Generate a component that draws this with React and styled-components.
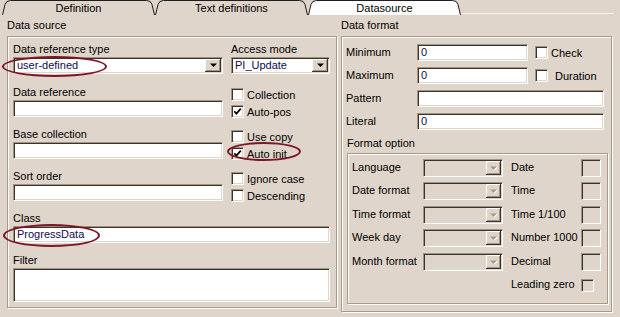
import React from 'react';
import styled, { createGlobalStyle, css } from 'styled-components';

const FACE = '#dfd5ca';
const SHADOW = '#a39381';
const DARK = '#3a342e';
const INK = '#0c0c50';
const ETCH = '#ab9885';

const Global = createGlobalStyle`
  html, body { margin: 0; padding: 0; background: ${FACE}; }
  body {
    font-family: "Liberation Sans", Arial, sans-serif;
    font-size: 11px;
    color: #000;
  }
`;

const sunken = css`
  box-sizing: border-box;
  border: 1px solid;
  border-color: ${SHADOW} #fff #fff ${SHADOW};
  box-shadow: inset 1px 1px 0 ${DARK}, inset -1px -1px 0 ${FACE};
`;

const Root = styled.div`
  position: relative;
  width: 620px;
  height: 317px;
  overflow: hidden;
  background: ${FACE};
  display: flex;
  flex-direction: column;
`;

/* ---------- tabs ---------- */
const TabBar = styled.div`
  display: flex;
  height: 15px;
  padding-left: 2px;
`;

const TabShell = styled.div`
  display: grid;
  width: 153px;
  height: 15px;
  & > * { grid-area: 1 / 1; }
`;

const TabText = styled.span`
  justify-self: center;
  align-self: start;
  line-height: 15px;
  padding-top: 1px;
  color: #000;
`;

const TabFill = styled.div`
  flex: 1;
  height: 13px;
  margin-right: 6px;
  border-bottom: 1px solid #f6f2ec;
`;

function Tab({ label, active }) {
  return (
    <TabShell>
      <svg width="153" height="15" viewBox="0 0 153 15">
        <path
          d="M0.5 15 L3 4.5 Q4 0.5 8.5 0.5 L144.5 0.5 Q149 0.5 150 4.5 L152.5 15"
          fill={active ? '#fff' : FACE}
          stroke="#1e1e1e"
          strokeWidth="1"
        />
      </svg>
      <TabText>{label}</TabText>
    </TabShell>
  );
}

/* ---------- groups ---------- */
const Main = styled.div`
  display: flex;
  gap: 4px;
  padding-left: 7px;
`;

const Column = styled.div`
  display: flex;
  flex-direction: column;
`;

const GroupTitle = styled.div`
  box-sizing: border-box;
  height: 21px;
  padding-top: 4px;
  line-height: 13px;
`;

const GroupBox = styled.div`
  box-sizing: border-box;
  width: ${(p) => p.$w}px;
  height: ${(p) => p.$h}px;
  border: 1px solid ${ETCH};
  box-shadow: inset 1px 1px 0 #fff, 1px 1px 0 #fff;
  padding: ${(p) => p.$pad};
  margin-left: ${(p) => p.$ml || 0}px;
  display: flex;
  flex-direction: column;
`;

/* ---------- generic controls ---------- */
const Label = styled.div`
  line-height: 13px;
  white-space: nowrap;
  margin-bottom: ${(p) => p.$mb || 0}px;
`;

const TextField = styled.div`
  ${sunken};
  width: ${(p) => (p.$w ? `${p.$w}px` : '100%')};
  height: ${(p) => p.$h || 17}px;
  background: #fff;
  color: ${INK};
  padding: 0 3px;
  line-height: 15px;
  white-space: nowrap;
`;

const ComboBox = styled.div`
  ${sunken};
  display: flex;
  align-items: stretch;
  width: ${(p) => p.$w}px;
  height: ${(p) => p.$h || 17}px;
  padding: 1px;
  background: ${(p) => (p.$disabled ? FACE : '#fff')};
`;

const ComboText = styled.div`
  flex: 1;
  color: ${INK};
  line-height: 13px;
  padding-left: 2px;
  white-space: nowrap;
`;

const ComboButton = styled.div`
  width: ${(p) => p.$bw || 16}px;
  background: ${FACE};
  box-shadow: inset -1px -1px 0 ${DARK}, inset 1px 1px 0 #fff,
    inset -2px -2px 0 ${SHADOW};
  display: flex;
  align-items: center;
  justify-content: center;
`;

function Combo({ w, h, value, disabled, bw }) {
  return (
    <ComboBox $w={w} $h={h} $disabled={disabled}>
      <ComboText>{value}</ComboText>
      <ComboButton $bw={bw}>
        <svg width="7" height="5" viewBox="0 0 7 5">
          {disabled && <path d="M1 1 H8 L4.5 4.5 Z" fill="#fff" />}
          <path d="M0 0.5 H7 L3.5 4 Z" fill={disabled ? '#a89a8a' : '#000'} />
        </svg>
      </ComboButton>
    </ComboBox>
  );
}

const CheckRow = styled.div`
  display: flex;
  align-items: center;
  height: ${(p) => p.$h || 17}px;
  gap: ${(p) => p.$gap || 3}px;
  white-space: nowrap;
`;

const CheckBoxSquare = styled.div`
  ${sunken};
  width: 13px;
  height: 13px;
  flex: none;
  background: #fff;
  display: flex;
  align-items: center;
  justify-content: center;
`;

function Check({ label, checked, gap, h }) {
  return (
    <CheckRow $gap={gap} $h={h}>
      <CheckBoxSquare>
        {checked && (
          <svg width="9" height="9" viewBox="0 0 9 9">
            <path d="M1.3 4.2 L3.4 6.6 L7.8 1.6" fill="none" stroke="#000" strokeWidth="1.7" />
          </svg>
        )}
      </CheckBoxSquare>
      <span>{label}</span>
    </CheckRow>
  );
}

/* ---------- left panel ---------- */
const FieldRow = styled.div`
  display: grid;
  grid-template-columns: 210px 99px;
  column-gap: 8px;
  height: ${(p) => p.$h || 42}px;
`;

const Field = styled.div`
  display: flex;
  flex-direction: column;
  margin-top: ${(p) => p.$mt || 0}px;
`;

const CheckStack = styled.div`
  display: flex;
  flex-direction: column;
`;

/* ---------- right panel ---------- */
const FormRow = styled.div`
  display: flex;
  align-items: center;
  height: 17px;
  margin-top: ${(p) => p.$mt || 0}px;
`;

const FormLabel = styled.div`
  width: ${(p) => p.$w}px;
  flex: none;
  line-height: 13px;
  white-space: nowrap;
  padding-bottom: ${(p) => p.$lift || 0}px;
`;

const CheckSlot = styled.div`
  margin-left: 7px;
`;

const SubTitle = styled.div`
  line-height: 13px;
  margin: 7px 0 3px 1px;
`;

const OptRow = styled.div`
  display: flex;
  align-items: center;
  height: 18px;
  margin-top: ${(p) => p.$mt || 0}px;
`;

const OptBox = styled.div`
  ${sunken};
  background: ${FACE};
  width: ${(p) => p.$w}px;
  height: ${(p) => p.$h}px;
  flex: none;
`;

const Spacer = styled.div`
  width: ${(p) => p.$w}px;
  flex: none;
`;

/* ---------- annotation ellipses ---------- */
const Mark = styled.span`
  position: absolute;
  box-sizing: border-box;
  border: 2.5px solid #7e1629;
  border-radius: 50%;
  pointer-events: none;
`;

const options = [
  ['Language', 'Date'],
  ['Date format', 'Time'],
  ['Time format', 'Time 1/100'],
  ['Week day', 'Number 1000'],
  ['Month format', 'Decimal'],
];
const optGaps = [0, 5, 6, 5, 6];

export default function App() {
  return (
    <Root>
      <Global />
      <TabBar>
        <Tab label="Definition" />
        <Tab label="Text definitions" />
        <Tab label="Datasource" active />
        <TabFill />
      </TabBar>

      <Main>
        <Column>
          <GroupTitle>Data source</GroupTitle>
          <GroupBox $w={330} $h={272} $pad="6px 5px 0 5px">
            <FieldRow $h={43}>
              <Field>
                <Label $mb={1}>Data reference type</Label>
                <Combo w={210} value="user-defined" />
              </Field>
              <Field>
                <Label $mb={1}>Access mode</Label>
                <Combo w={99} value="PI_Update" />
              </Field>
            </FieldRow>

            <FieldRow>
              <Field>
                <Label $mb={1}>Data reference</Label>
                <TextField />
              </Field>
              <CheckStack>
                <Check label="Collection" />
                <Check label="Auto-pos" checked />
              </CheckStack>
            </FieldRow>

            <FieldRow>
              <Field>
                <Label $mb={1}>Base collection</Label>
                <TextField />
              </Field>
              <CheckStack>
                <Check label="Use copy" />
                <Check label="Auto init" checked />
              </CheckStack>
            </FieldRow>

            <FieldRow>
              <Field>
                <Label $mb={1}>Sort order</Label>
                <TextField />
              </Field>
              <CheckStack>
                <Check label="Ignore case" />
                <Check label="Descending" />
              </CheckStack>
            </FieldRow>

            <Field>
              <Label $mb={1}>Class</Label>
              <TextField $w={317}>ProgressData</TextField>
            </Field>
            <Field $mt={11}>
              <Label $mb={1}>Filter</Label>
              <TextField $w={317} $h={34} />
            </Field>
          </GroupBox>
        </Column>

        <Column>
          <GroupTitle>Data format</GroupTitle>
          <GroupBox $w={271} $h={276} $pad="7px 4px 0 4px">
            <FormRow>
              <FormLabel $w={71}>Minimum</FormLabel>
              <TextField $w={111}>0</TextField>
              <CheckSlot>
                <Check label="Check" gap={3} />
              </CheckSlot>
            </FormRow>
            <FormRow $mt={6}>
              <FormLabel $w={71}>Maximum</FormLabel>
              <TextField $w={111}>0</TextField>
              <CheckSlot>
                <Check label="Duration" gap={7} />
              </CheckSlot>
            </FormRow>
            <FormRow $mt={6}>
              <FormLabel $w={71}>Pattern</FormLabel>
              <TextField $w={187} />
            </FormRow>
            <FormRow $mt={6}>
              <FormLabel $w={71}>Literal</FormLabel>
              <TextField $w={187}>0</TextField>
            </FormRow>

            <SubTitle>Format option</SubTitle>
            <GroupBox $w={261} $h={151} $pad="5px 4px 0 4px" $ml={1}>
              {options.map(([a, b], i) => (
                <OptRow key={a} $mt={optGaps[i]}>
                  <FormLabel $w={71} $lift={2}>{a}</FormLabel>
                  <Combo w={80} h={18} disabled bw={15} />
                  <Spacer $w={8} />
                  <FormLabel $w={70} $lift={2}>{b}</FormLabel>
                  <OptBox $w={20} $h={18} />
                </OptRow>
              ))}
              <OptRow $mt={5}>
                <Spacer $w={159} />
                <FormLabel $w={70} $lift={1}>Leading zero</FormLabel>
                <OptBox $w={13} $h={13} />
              </OptRow>
            </GroupBox>
          </GroupBox>
        </Column>
      </Main>

      <Mark style={{ left: 2, top: 56, width: 105, height: 21 }} />
      <Mark style={{ left: 227, top: 142, width: 74, height: 19 }} />
      <Mark style={{ left: 3, top: 224, width: 97, height: 23 }} />
    </Root>
  );
}
